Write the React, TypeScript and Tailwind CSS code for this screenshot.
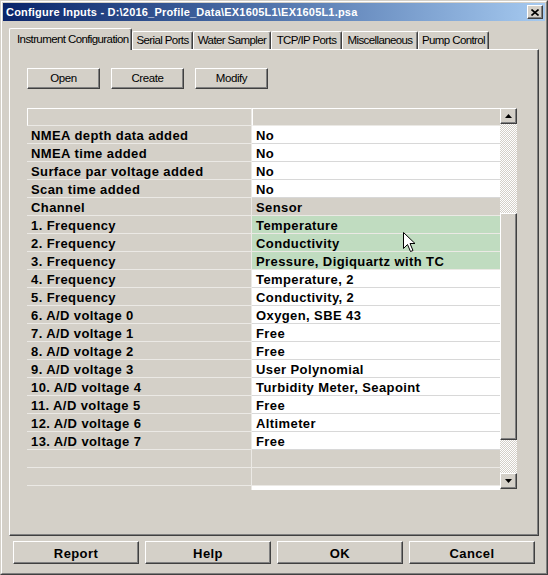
import React from "react";

type Row = { label: string; value: string; kind: "white" | "gray" | "green" };

const rows: Row[] = [
  { label: "NMEA depth data added", value: "No", kind: "white" },
  { label: "NMEA time added", value: "No", kind: "white" },
  { label: "Surface par voltage added", value: "No", kind: "white" },
  { label: "Scan time added", value: "No", kind: "white" },
  { label: "Channel", value: "Sensor", kind: "gray" },
  { label: "1. Frequency", value: "Temperature", kind: "green" },
  { label: "2. Frequency", value: "Conductivity", kind: "green" },
  { label: "3. Frequency", value: "Pressure, Digiquartz with TC", kind: "green" },
  { label: "4. Frequency", value: "Temperature, 2", kind: "white" },
  { label: "5. Frequency", value: "Conductivity, 2", kind: "white" },
  { label: "6. A/D voltage 0", value: "Oxygen, SBE 43", kind: "white" },
  { label: "7. A/D voltage 1", value: "Free", kind: "white" },
  { label: "8. A/D voltage 2", value: "Free", kind: "white" },
  { label: "9. A/D voltage 3", value: "User Polynomial", kind: "white" },
  { label: "10. A/D voltage 4", value: "Turbidity Meter, Seapoint", kind: "white" },
  { label: "11. A/D voltage 5", value: "Free", kind: "white" },
  { label: "12. A/D voltage 6", value: "Altimeter", kind: "white" },
  { label: "13. A/D voltage 7", value: "Free", kind: "white" },
  { label: "", value: "", kind: "gray" },
  { label: "", value: "", kind: "gray" },
];

const raised =
  "bg-[#d4d0c8] border border-t-white border-l-white border-r-[#404040] border-b-[#404040] shadow-[inset_-1px_-1px_#808080]";

const tabs = [
  { name: "Serial Ports", w: "w-[61px]" },
  { name: "Water Sampler", w: "w-[78px]" },
  { name: "TCP/IP Ports", w: "w-[71px]" },
  { name: "Miscellaneous", w: "w-[76px]" },
  { name: "Pump Control", w: "w-[71px]" },
];

function cellBg(kind: Row["kind"]) {
  if (kind === "white") return "bg-white";
  if (kind === "green") return "bg-[#c0dcc0]";
  return "bg-[#d4d0c8]";
}

export default function App() {
  return (
    <div className="relative w-[548px] h-[575px] overflow-hidden bg-[#d4d0c8] border border-t-[#d4d0c8] border-l-[#d4d0c8] border-r-[#404040] border-b-[#404040] font-['Liberation_Sans',Arial,sans-serif] text-black">
      <div className="h-full flex flex-col border border-t-white border-l-white border-r-[#808080] border-b-[#808080] p-px">
        {/* Title bar */}
        <div className="h-[18px] shrink-0 flex items-center justify-between pl-[3px] pr-[2px] bg-gradient-to-r from-[#0a246a] to-[#a6caf0]">
          <span className="text-white font-bold text-[11px] tracking-[0.2px] leading-none whitespace-nowrap">
            Configure Inputs - D:\2016_Profile_Data\EX1605L1\EX1605L1.psa
          </span>
          <div className={`w-[16px] h-[14px] flex items-center justify-center ${raised}`}>
            <svg width="8" height="7" viewBox="0 0 8 7">
              <path d="M0.5 0.5 L7.5 6.5 M7.5 0.5 L0.5 6.5" stroke="#000" strokeWidth="1.6" />
            </svg>
          </div>
        </div>

        {/* Tabs */}
        <div className="mt-[7px] ml-[6px] h-[21px] shrink-0 flex items-end">
          <div className="relative z-10 -mb-px w-[123px] h-[22px] bg-[#d4d0c8] border-t border-l border-white border-r border-r-[#404040] shadow-[inset_-1px_0_#808080] rounded-t-[2px] flex items-start pt-[3px] pl-[7px]">
            <span className="text-[11.5px] tracking-[-0.6px] leading-[14px] whitespace-nowrap">Instrument Configuration</span>
          </div>
          {tabs.map((t) => (
            <div
              key={t.name}
              className={`${t.w} h-[18px] bg-[#d4d0c8] border-t border-l border-white border-r border-r-[#404040] shadow-[inset_-1px_0_#808080] rounded-t-[2px] flex items-center justify-center pt-px`}
            >
              <span className="text-[11.5px] tracking-[-0.6px] leading-none whitespace-nowrap">{t.name}</span>
            </div>
          ))}
        </div>

        {/* Panel */}
        <div className="mx-[6px] h-[487px] shrink-0 flex flex-col border border-t-white border-l-white border-r-[#404040] border-b-[#404040] shadow-[inset_-1px_-1px_#808080]">
          <div className="mt-[18px] ml-[17px] flex gap-[11px]">
            {["Open", "Create", "Modify"].map((b) => (
              <div key={b} className={`w-[73px] h-[21px] flex items-center justify-center ${raised}`}>
                <span className="text-[11.5px] tracking-[-0.4px] leading-none">{b}</span>
              </div>
            ))}
          </div>

          {/* Grid */}
          <div className="mt-[19px] ml-[17px] flex h-[382px]">
            <div className="w-[473px] flex flex-col">
              <div className="flex h-[18px] shrink-0">
                <div className="w-[225px] bg-[#d4d0c8] border-t border-l border-white border-r border-r-[#ebe9e5] border-b border-b-[#ebe9e5]" />
                <div className="w-[248px] bg-[#d4d0c8] border-t border-l border-white border-b border-b-[#ebe9e5]" />
              </div>
              {rows.map((r, i) => (
                <div key={i} className="flex h-[18px] shrink-0">
                  <div className="w-[225px] bg-[#d4d0c8] border-r border-b border-[#ebe9e5] pl-[4px] pt-px flex items-center">
                    <span className="font-bold text-[13px] tracking-[0.4px] leading-none whitespace-nowrap">{r.label}</span>
                  </div>
                  <div
                    className={`w-[248px] ${cellBg(r.kind)} border-b ${
                      r.kind === "white" ? "border-[#d8d8d8]" : "border-[#ebe9e5]"
                    } pl-[4px] pt-px flex items-center`}
                  >
                    <span className="font-bold text-[13px] tracking-[0.4px] leading-none whitespace-nowrap">{r.value}</span>
                  </div>
                </div>
              ))}
              <div className="flex flex-1">
                <div className="w-[225px] bg-[#d4d0c8] border-r border-[#ebe9e5]" />
                <div className="w-[248px] bg-white" />
              </div>
            </div>

            {/* Scrollbar */}
            <div className="w-[17px] h-[381px] flex flex-col bg-[repeating-conic-gradient(#d4d0c8_0%_25%,#ffffff_0%_50%)] bg-[length:2px_2px]">
              <div className={`h-[16px] shrink-0 flex items-center justify-center ${raised}`}>
                <svg width="7" height="4" viewBox="0 0 7 4">
                  <polygon points="3.5,0 7,4 0,4" fill="#000" />
                </svg>
              </div>
              <div className="h-[89px] shrink-0" />
              <div className={`h-[227px] shrink-0 ${raised}`} />
              <div className="flex-1" />
              <div className={`h-[16px] shrink-0 flex items-center justify-center ${raised}`}>
                <svg width="7" height="4" viewBox="0 0 7 4">
                  <polygon points="0,0 7,0 3.5,4" fill="#000" />
                </svg>
              </div>
            </div>
          </div>
        </div>

        {/* Bottom buttons */}
        <div className="mt-[5px] ml-[10px] flex gap-[6px]">
          {["Report", "Help", "OK", "Cancel"].map((b) => (
            <div key={b} className={`w-[126px] h-[23px] flex items-center justify-center pt-px ${raised}`}>
              <span className="font-bold text-[13px] tracking-[0.4px] leading-none">{b}</span>
            </div>
          ))}
        </div>
      </div>

      {/* Mouse cursor */}
      <svg className="absolute left-[402px] top-[231px]" width="13" height="21" viewBox="0 0 13 21">
        <path
          d="M0.5 0.5 L0.5 16.5 L4.5 12.5 L7.5 19.5 L10 18.5 L7 11.5 L12 11.5 Z"
          fill="#fff"
          stroke="#000"
          strokeWidth="1"
          strokeLinejoin="miter"
        />
      </svg>
    </div>
  );
}
